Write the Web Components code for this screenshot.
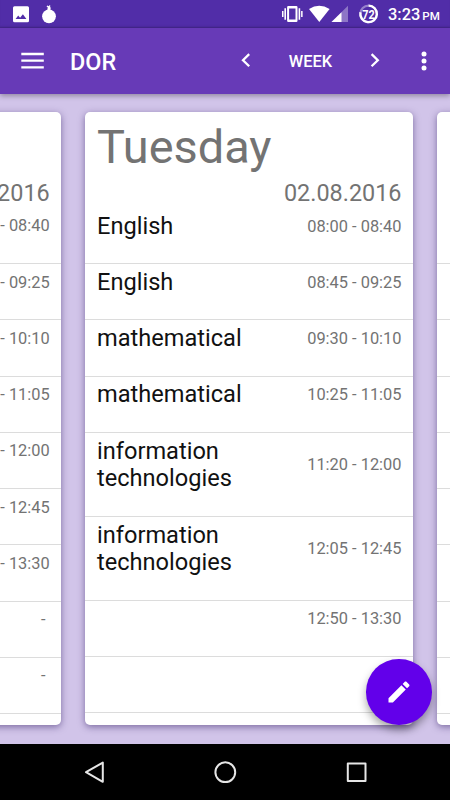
<!DOCTYPE html>
<html lang="en">
<head>
<meta charset="utf-8">
<title>DOR</title>
<style>
    html, body {
        margin: 0;
        height: 100%;
        overflow: hidden;
    }

    body {
        font-family: Roboto, "Noto Sans", sans-serif;
    }
</style>
</head>
<body>
<timetable-app>
    <day-card date="2016" times="- 08:40|- 09:25|- 10:10|- 11:05|- 12:00|- 12:45|- 13:30|- |- "></day-card>
    <day-card day="Tuesday" date="02.08.2016"
        subjects="English|English|mathematical|mathematical|information technologies|information technologies"
        times="08:00 - 08:40|08:45 - 09:25|09:30 - 10:10|10:25 - 11:05|11:20 - 12:00|12:05 - 12:45|12:50 - 13:30|"></day-card>
    <day-card times="||||||||"></day-card>
</timetable-app>

<script>
class StatusBar extends HTMLElement {
    constructor() {
        super();
        this.attachShadow({ mode: "open" });
        this.shadowRoot.innerHTML = `
        <style>
            :host {
                display: block;
                height: 28px;
                background: #512da8;
                box-shadow: inset 0 -2px 2px -1px rgba(0, 0, 0, .2);
                color: #fff;
            }

            .bar {
                display: grid;
                grid-template-columns: 380px auto;
                height: 28px;
            }

            svg {
                display: block;
            }

            .clock {
                padding: 5px 0 0 8px;
                font-size: 16.4px;
                font-weight: 500;
                line-height: 19px;
                white-space: nowrap;
            }

            small {
                font-size: 11.6px;
                margin-left: 2px;
            }
        </style>

        <div class="bar">
            <svg width="380" height="28" fill="#fff">
                <path fill-rule="evenodd" d="M14.5 6.2h13q1.5 0 1.5 1.5v13q0 1.500-1.500 1.500h-13q-1.500 0-1.500-1.500v-13q0-1.500 1.500-1.500zM15.600 19h10.800l-3.500-4.700-2.800 3.400-1.900-2.300z"/>
                <circle cx="49" cy="16.300" r="6.900"/>
                <path d="M47.300 10.500l.4-3.300-1.200-.8.8-.9 1.500.8.9-1.300.8.9-.8 1 1.500 1-.9.9.4 1.700z"/>

                <path fill-rule="evenodd" d="M288.300 6h8q1.200 0 1.200 1.200v13.600q0 1.200-1.200 1.200h-8q-1.200 0-1.200-1.200V7.200q0-1.200 1.200-1.200zM289.100 8.500v11h6.400v-11z"/>
                <path d="M284.400 8.300h1.600v11.400h-1.600zM282 11h1.500v6H282zM298.600 8.300h1.600v11.400h-1.600zM301.100 11h1.500v6h-1.500z"/>
                <path d="M309 9q10.200-6.300 20.600 0l-10.300 13z"/>
                <path d="M348 5.800V22h-16.500z" opacity=".35"/>
                <path d="M341.500 12.200V22h-10z"/>
                <circle cx="368.600" cy="13.900" r="8.300" fill="none" stroke="#fff" stroke-width="2.300" opacity=".4"/>
                <path d="M368.600 5.600A8.300 8.300 0 1 1 360.450 12.300" fill="none" stroke="#fff" stroke-width="2.300"/>
                <text x="368.600" y="18.500" font-size="12.500" font-weight="700" text-anchor="middle" textLength="12.500" lengthAdjust="spacingAndGlyphs">72</text>
            </svg>
            <div class="clock">3:23<small>PM</small></div>
        </div>
        `;
    }
}

class AppBar extends HTMLElement {
    constructor() {
        super();
        this.attachShadow({ mode: "open" });
        this.shadowRoot.innerHTML = `
        <style>
            :host {
                display: grid;
                grid-template-columns: 70px 166px 20px 108px 22px 26px 24px;
                align-items: center;
                height: 65.7px;
                background: #673ab7;
                color: #fff;
                position: relative;
                box-shadow: 0 2px 5px rgba(0, 0, 0, .3);
            }

            h1 {
                margin: 2px 0 0;
                font-size: 23.4px;
                font-weight: 500;
                line-height: 28px;
            }

            .view {
                font-size: 16.4px;
                font-weight: 500;
                text-align: center;
                padding: 1px 0 0 1px;
            }

            svg {
                display: block;
            }
        </style>

        <svg width="70" height="66"><path d="M21.300 26h22.500M21.300 32.700h22.500M21.300 39.400h22.500" stroke="#fff" stroke-width="2.300"/></svg>
        <h1>DOR</h1>
        <svg width="20" height="66"><path d="M13.200 26.200L7 32.200l6.200 6.100" fill="none" stroke="#fff" stroke-width="2.300"/></svg>
        <div class="view">WEEK</div>
        <svg width="22" height="66"><path d="M7.600 26.200l6.200 6-6.200 6.100" fill="none" stroke="#fff" stroke-width="2.300"/></svg>
        <span></span>
        <svg width="24" height="66" fill="#fff"><circle cx="12" cy="26" r="2.500"/><circle cx="12" cy="33" r="2.500"/><circle cx="12" cy="40" r="2.500"/></svg>
        `;
    }
}

class DayCard extends HTMLElement {
    constructor() {
        super();
        this.day = this.getAttribute("day") || "";
        this.date = this.getAttribute("date") || "";
        this.subjects = (this.getAttribute("subjects") || "").split("|");
        this.times = (this.getAttribute("times") || "").split("|");

        this.attachShadow({ mode: "open" });
        this.shadowRoot.innerHTML = this._getTemplate();
    }

    _getRows() {
        return this.times.map((time, i) => `
            <li><span class="subject">${this.subjects[i] || ""}</span><span class="time">${time}</span></li>
        `).join("");
    }

    _getTemplate() {
        return `
        <style>
            :host {
                display: block;
                box-sizing: border-box;
                flex: 0 0 328.1px;
                height: 612.5px;
                background: #fff;
                border-radius: 5px;
                overflow: hidden;
                box-shadow: 0 2px 7px rgba(40, 20, 90, .5);
            }

            header {
                height: 95.5px;
                padding: 7px 11.6px 0 12px;
                box-sizing: border-box;
                color: #737373;
            }

            h2 {
                margin: 0;
                height: 55px;
                font-size: 46.9px;
                font-weight: 400;
                line-height: 55px;
            }

            .date {
                margin-top: 6px;
                font-size: 23.4px;
                line-height: 27.5px;
                text-align: right;
            }

            ul {
                list-style: none;
                margin: 0;
                padding: 0;
            }

            li {
                display: flex;
                align-items: center;
                justify-content: space-between;
                box-sizing: border-box;
                padding: 4.7px 11.6px 22.9px 12px;
                border-bottom: 1px solid #dcdcdc;
            }

            .subject {
                width: 190px;
                min-height: 27.65px;
                font-size: 23.6px;
                line-height: 27.65px;
                color: #111;
            }

            .time {
                margin-top: -1px;
                font-size: 16.4px;
                line-height: 19px;
                color: #737373;
                white-space: pre;
            }
        </style>

        <header>
            <h2>${this.day}</h2>
            <div class="date">${this.date}</div>
        </header>
        <ul>${this._getRows()}</ul>
        `;
    }
}

class EditButton extends HTMLElement {
    constructor() {
        super();
        this.attachShadow({ mode: "open" });
        this.shadowRoot.innerHTML = `
        <style>
            :host {
                display: grid;
                place-items: center;
                width: 65.6px;
                height: 65.6px;
                border-radius: 50%;
                background: #6200ea;
                box-shadow: 0 5px 9px rgba(0, 0, 0, .35);
            }
        </style>

        <svg width="28" height="28" viewBox="0 0 24 24" fill="#fff">
            <path d="M3 17.250V21h3.750L17.810 9.940l-3.750-3.750L3 17.250zM20.710 7.040c.39-.39.39-1.020 0-1.410l-2.340-2.340c-.39-.39-1.020-.39-1.410 0l-1.830 1.830 3.750 3.750 1.830-1.830z"/>
        </svg>
        `;
    }
}

class NavBar extends HTMLElement {
    constructor() {
        super();
        this.attachShadow({ mode: "open" });
        this.shadowRoot.innerHTML = `
        <style>
            :host {
                display: block;
                height: 56px;
                background: #000;
            }

            svg {
                display: block;
            }
        </style>

        <svg width="450" height="56" fill="none" stroke="#e6e6e6" stroke-width="2" stroke-linejoin="round">
            <path d="M102.800 18.600v19.200L86 28.200z"/>
            <circle cx="225.300" cy="28.200" r="9.900"/>
            <rect x="347.800" y="19.600" width="17.700" height="17.400"/>
        </svg>
        `;
    }
}

class TimetableApp extends HTMLElement {
    constructor() {
        super();
        this.attachShadow({ mode: "open" });
        this.shadowRoot.innerHTML = `
        <style>
            :host {
                display: flex;
                flex-direction: column;
                width: 450px;
                height: 800px;
                overflow: hidden;
                position: relative;
                background: #d1c4e9;
            }

            app-bar {
                z-index: 1;
            }

            main {
                flex: 1;
                display: flex;
                align-items: flex-start;
                gap: 23.7px;
                padding-top: 18.8px;
                overflow: hidden;
            }

            ::slotted(:first-child) {
                margin-left: -266.8px;
            }

            edit-button {
                position: absolute;
                left: 366px;
                top: 659.4px;
            }
        </style>

        <status-bar></status-bar>
        <app-bar></app-bar>
        <main><slot></slot></main>
        <nav-bar></nav-bar>
        <edit-button></edit-button>
        `;
    }
}

customElements.define("status-bar", StatusBar);
customElements.define("app-bar", AppBar);
customElements.define("day-card", DayCard);
customElements.define("edit-button", EditButton);
customElements.define("nav-bar", NavBar);
customElements.define("timetable-app", TimetableApp);
</script>
</body>
</html>
